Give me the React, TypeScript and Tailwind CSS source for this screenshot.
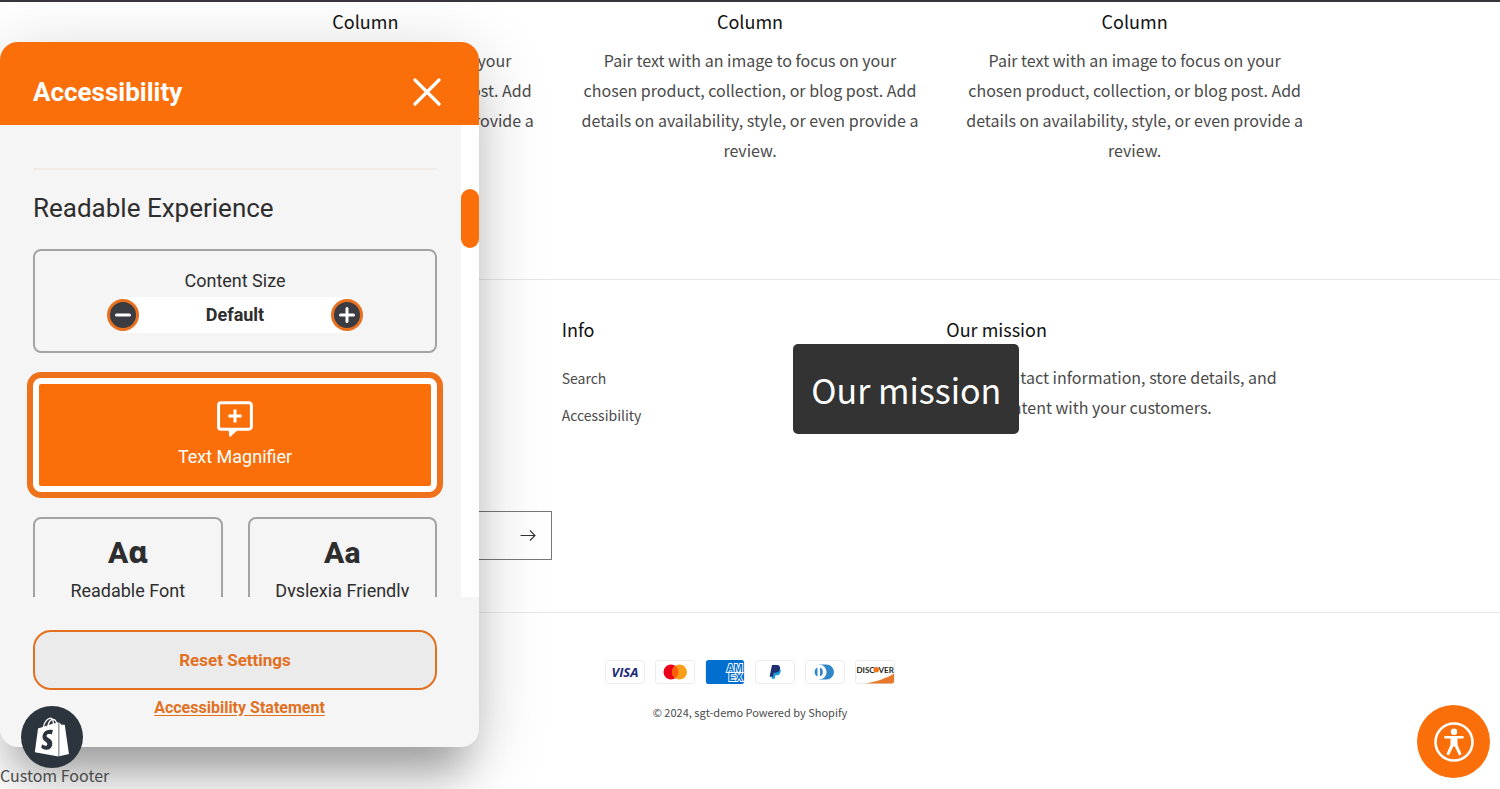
import { useState } from 'react';
import { FaShopify } from 'react-icons/fa';

const columns = [1, 2, 3];
const columnText =
  'Pair text with an image to focus on your chosen product, collection, or blog post. Add details on availability, style, or even provide a review.';

const sizes = ['Small', 'Default', 'Large'];

function MagnifierIcon() {
  return (
    <svg className="w-9 h-9" viewBox="0 0 36 36" fill="none" aria-hidden="true">
      <path
        d="M4 1.8h28a2.4 2.4 0 0 1 2.4 2.4v21.6a2.4 2.4 0 0 1-2.4 2.4H4a2.4 2.4 0 0 1-2.4-2.4V4.2A2.4 2.4 0 0 1 4 1.8Z"
        stroke="currentColor"
        strokeWidth="3"
      />
      <path d="M11.500 28h10.500l-9.500 8.500Z" fill="currentColor" />
      <path d="M18 8.500v13M11.500 15h13" stroke="currentColor" strokeWidth="3" />
    </svg>
  );
}

function CardFrame({ label, children }: { label: string; children: React.ReactNode }) {
  return (
    <li>
      <svg className="w-10 h-6" viewBox="0 0 40 24" role="img" aria-label={label}>
        <rect x="0.5" y="0.5" width="39" height="23" rx="2.5" fill="#fff" stroke="#ececf0" />
        {children}
      </svg>
    </li>
  );
}

function PaymentIcons() {
  return (
    <ul className="flex justify-center gap-[10px]">
      <CardFrame label="Visa">
        <text x="20" y="17" textAnchor="middle" fontSize="13" fontStyle="italic" fontWeight="700" fontFamily="Open Sans, sans-serif" fill="#1d2a78">VISA</text>
      </CardFrame>
      <CardFrame label="Mastercard">
        <circle cx="16" cy="12" r="7.5" fill="#eb001b" />
        <circle cx="24.5" cy="12" r="7.5" fill="#f79e1b" />
        <path d="M20.25 5.8a7.5 7.5 0 0 1 0 12.4a7.5 7.5 0 0 1 0-12.4Z" fill="#ff5f00" />
      </CardFrame>
      <CardFrame label="American Express">
        <rect x="1" y="0" width="38" height="24" rx="2.5" fill="#006fcf" />
        <g fill="#006fcf" stroke="#fff" strokeWidth="1.8" paintOrder="stroke" fontFamily="Liberation Sans, sans-serif" fontWeight="700" fontSize="10.5">
          <text x="21.5" y="11.5">AM</text>
          <text x="23.5" y="20.5">EX</text>
        </g>
      </CardFrame>
      <CardFrame label="PayPal">
        <path d="M18.4 8.2h5.2c2 .3 2.4 2 2 3.7c-.6 2.5-2.3 3.4-4.3 3.4h-.9l-.7 3.5h-3.2Z" fill="#179bd7" />
        <path d="M17 5h4.9c2.3 0 3.6 1.4 3.1 3.8c-.5 2.7-2.3 4-4.8 4h-1.6l-.8 3.9h-3.2Z" fill="#1f2f6f" />
      </CardFrame>
      <CardFrame label="Diners Club">
        <path d="M14 4.500h7.500a7.500 7.500 0 0 1 0 15H14Z" fill="#3086c8" />
        <circle cx="14" cy="12" r="7.6" fill="#fff" />
        <path d="M12.500 7.600a4.800 4.800 0 0 0 0 8.800ZM15 7.600a4.800 4.800 0 0 1 0 8.800Z" fill="#3086c8" />
      </CardFrame>
      <CardFrame label="Discover">
        <path d="M39 13.5V21a2.5 2.5 0 0 1-2.5 2.5H10C22 21.5 32 18 39 13.5Z" fill="#e8792b" />
        <g fontSize="8" fontWeight="700" fontFamily="Lato, sans-serif" fill="#231f20">
          <text x="1.5" y="12.5">DISC</text>
          <text x="23.5" y="12.5">VER</text>
        </g>
        <circle cx="21.2" cy="9.7" r="2.7" fill="#f47216" />
      </CardFrame>
    </ul>
  );
}

function AccessibilityPanel({ onClose }: { onClose: () => void }) {
  const [size, setSize] = useState(1);

  return (
    <aside className="absolute left-0 top-10 w-[479px] h-[705px] flex flex-col rounded-[18px] overflow-hidden bg-[#f5f5f5] text-[#2e2e2e] font-[Roboto,sans-serif] shadow-[0_16px_70px_rgba(0,0,0,0.2),0_40px_40px_-16px_rgba(0,0,0,0.28)]">
      <header className="flex items-center justify-between bg-[#fa6f0a] text-white h-[83px] shrink-0 pl-[33px] pr-[38px] pt-4">
        <h2 className="text-[26px] leading-8 font-bold">Accessibility</h2>
        <button type="button" aria-label="Close" onClick={onClose}>
          <svg className="w-7 h-7" viewBox="0 0 28 28" fill="none" aria-hidden="true">
            <path d="M2 2l24 24M26 2L2 26" stroke="currentColor" strokeWidth="3.2" strokeLinecap="round" />
          </svg>
        </button>
      </header>

      <div className="flex flex-1 min-h-0">
        <div className="flex-1 overflow-hidden pl-[33px] pr-6">
          <hr className="mt-[43px] border-t-2 border-[#eeebe8]" />
          <h3 className="mt-5 text-[26px] leading-9">Readable Experience</h3>

          <div className="mt-[23px] h-[104px] flex flex-col items-center border-2 border-[#a3a3a6] rounded-lg pt-5">
            <span className="text-lg leading-5">Content Size</span>
            <div className="mt-[6px] w-64 h-9 flex items-center justify-between bg-[linear-gradient(to_right,transparent_16px,white_16px,white_240px,transparent_240px)]">
              <button
                type="button"
                aria-label="Decrease content size"
                className="w-8 h-8 rounded-full border-3 border-[#e8701f] bg-[#3b3b42] text-white flex items-center justify-center"
                onClick={() => setSize(Math.max(0, size - 1))}
              >
                <svg className="w-4 h-4" viewBox="0 0 16 16" aria-hidden="true">
                  <path d="M1.5 8h13" stroke="currentColor" strokeWidth="3" strokeLinecap="round" />
                </svg>
              </button>
              <strong className="text-lg leading-5 font-bold">{sizes[size]}</strong>
              <button
                type="button"
                aria-label="Increase content size"
                className="w-8 h-8 rounded-full border-3 border-[#e8701f] bg-[#3b3b42] text-white flex items-center justify-center"
                onClick={() => setSize(Math.min(sizes.length - 1, size + 1))}
              >
                <svg className="w-4 h-4" viewBox="0 0 16 16" aria-hidden="true">
                  <path d="M1.5 8h13M8 1.5v13" stroke="currentColor" strokeWidth="3" strokeLinecap="round" />
                </svg>
              </button>
            </div>
          </div>

          <button
            type="button"
            className="mt-[25px] w-full h-[114px] flex flex-col items-center justify-center gap-2 border-6 border-white rounded-lg bg-[#fa6f0a] text-white ring-6 ring-[#ee711b]"
          >
            <MagnifierIcon />
            <span className="text-lg leading-6">Text Magnifier</span>
          </button>

          <div className="mt-[25px] grid grid-cols-2 gap-[25px]">
            <button type="button" className="h-[104px] flex flex-col items-center border-2 border-[#a3a3a6] rounded-lg pt-[14px]">
              <span className="text-3xl leading-10 font-extrabold font-[Roboto,'Noto_Sans',sans-serif]" aria-hidden="true">Aɑ</span>
              <span className="mt-2 text-lg leading-5">Readable Font</span>
            </button>
            <button type="button" className="h-[104px] flex flex-col items-center border-2 border-[#a3a3a6] rounded-lg pt-[14px]">
              <span className="text-3xl leading-10 font-extrabold" aria-hidden="true">Aa</span>
              <span className="mt-2 text-lg leading-5">Dyslexia Friendly</span>
            </button>
          </div>
        </div>
        <div className="w-[18px] bg-white pt-16">
          <div className="h-[59px] rounded-full bg-[#fa6f0a]" />
        </div>
      </div>

      <footer className="h-[150px] shrink-0 pt-[33px] text-[#e2701f]">
        <div className="pl-[33px] pr-[42px]">
          <button type="button" className="w-full h-[60px] border-2 border-[#e2701f] rounded-[18px] bg-[#ebebeb] text-[17px] leading-5 font-bold">
            Reset Settings
          </button>
        </div>
        <div className="mt-[6px] text-center">
          <a href="#statement" className="text-base leading-5 font-bold underline underline-offset-2">Accessibility Statement</a>
        </div>
      </footer>
    </aside>
  );
}

export default function App() {
  const [open, setOpen] = useState(true);

  return (
    <div className="relative min-h-screen overflow-hidden bg-white border-t-2 border-[#38363a] text-[#4a4a4a] font-['Noto_Sans_CJK_SC',sans-serif]">
      <main className="h-[277px] pt-[3px]">
        <div className="max-w-[1146px] mx-auto grid grid-cols-3 gap-2 text-center">
          {columns.map((n) => (
            <section key={n} className="px-4">
              <h3 className="text-lg leading-8 text-[#121212]">Column</h3>
              <p className="mt-2 text-base leading-[30px]">{columnText}</p>
            </section>
          ))}
        </div>
      </main>

      <footer className="border-t border-[#e8e8e8]">
        <div className="max-w-[1146px] mx-auto grid grid-cols-3 gap-2 h-[332px] pt-[35px]">
          <div className="flex flex-col justify-end pb-[52px] pr-[2px]">
            <form className="flex items-center h-[49px] border border-[#777] pr-[15px]" onSubmit={(e) => e.preventDefault()}>
              <input type="email" aria-label="Email" className="flex-1 min-w-0 h-full px-4 outline-none" />
              <button type="submit" aria-label="Subscribe">
                <svg className="w-4 h-4" viewBox="0 0 16 16" fill="none" stroke="#333" strokeWidth="1.1" aria-hidden="true">
                  <path d="M0.5 7.500h14.500M10 2.500l5 5l-5 5" />
                </svg>
              </button>
            </form>
          </div>
          <div>
            <h2 className="text-lg leading-7 text-[#121212]">Info</h2>
            <ul className="mt-[17px] text-sm leading-[37px]">
              <li><a href="#search">Search</a></li>
              <li><a href="#accessibility">Accessibility</a></li>
            </ul>
          </div>
          <div className="relative">
            <h2 className="text-lg leading-7 text-[#121212]">Our mission</h2>
            <p className="mt-[19px] text-base leading-[30px]">Share contact information, store details, and brand content with your customers.</p>
            <div role="tooltip" className="absolute -left-[153px] top-[29px] h-[90px] px-[18px] flex items-center rounded-[5px] bg-[#333] text-white text-[34px] whitespace-nowrap">
              Our mission
            </div>
          </div>
        </div>

        <div className="border-t border-[#e8e8e8] pt-[47px]">
          <PaymentIcons />
          <p className="mt-[18px] text-center text-[11px] leading-5">
            © 2024, <a href="#home">sgt-demo</a> <a href="#shopify">Powered by Shopify</a>
          </p>
        </div>
      </footer>

      {open && <AccessibilityPanel onClose={() => setOpen(false)} />}

      <div className="relative mt-[39px] text-base leading-7">Custom Footer</div>

      <a
        href="#shop"
        aria-label="Shopify"
        className="absolute left-[21px] bottom-[21px] w-[62px] h-[62px] rounded-full bg-[#2c343e] text-white flex items-center justify-center"
      >
        <FaShopify className="w-10 h-10" />
      </a>

      <button
        type="button"
        aria-label="Accessibility options"
        onClick={() => setOpen(!open)}
        className="absolute right-[10px] bottom-[11px] w-[73px] h-[73px] rounded-full bg-[#fa6f0a] text-white flex items-center justify-center"
      >
        <svg className="w-10 h-10" viewBox="0 0 40 40" fill="none" stroke="currentColor" aria-hidden="true">
          <circle cx="20" cy="20" r="18.500" strokeWidth="2.600" />
          <circle cx="20" cy="9.800" r="3.200" fill="currentColor" stroke="none" />
          <path d="M11.500 15.200h17" strokeWidth="2.600" strokeLinecap="round" />
          <path d="M16.500 15h7v9.500h-7Z" fill="currentColor" stroke="none" />
          <path d="M22 23.500l3.800 8.200M18 23.500l-3.800 8.200" strokeWidth="3" strokeLinecap="round" />
        </svg>
      </button>
    </div>
  );
}
